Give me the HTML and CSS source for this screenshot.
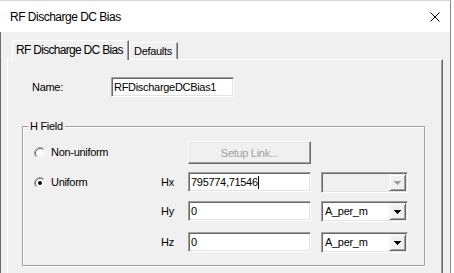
FILE: index.html
```html
<!DOCTYPE html>
<html>
<head>
<meta charset="utf-8">
<link rel="stylesheet" href="styles.css">
</head>
<body>
<div class="window">
  <div class="titlebar">
    <span class="title">RF Discharge DC Bias</span>
    <svg class="close" width="10" height="10" viewBox="0 0 10 10"><path d="M0.5 0.5L9.5 9.5M9.5 0.5L0.5 9.5" stroke="#000" stroke-width="1" fill="none"/></svg>
  </div>
  <div class="client">
    <div class="tabs">
      <div class="tab active">RF Discharge DC Bias</div>
      <div class="tab">Defaults</div>
    </div>
    <div class="panel">
      <div class="name-row">
        <span class="name-label">Name:</span>
        <div class="textbox name-box">RFDischargeDCBias1</div>
      </div>
      <fieldset class="group">
        <legend>H Field</legend>
        <div class="row row-first">
          <svg class="radio" width="12" height="12" viewBox="0 0 12 12">
            <circle cx="6" cy="6" r="5" fill="#fff"/>
            <path d="M2.1 9.9A5.5 5.5 0 0 1 9.9 2.1" fill="none" stroke="#a0a0a0"/>
            <path d="M9.9 2.1A5.5 5.5 0 0 1 2.1 9.9" fill="none" stroke="#fff"/>
            <path d="M2.82 9.18A4.5 4.5 0 0 1 9.18 2.82" fill="none" stroke="#696969"/>
            <path d="M9.18 2.82A4.5 4.5 0 0 1 2.82 9.18" fill="none" stroke="#e3e3e3"/>
          </svg>
          <span class="radio-label">Non-uniform</span>
          <span class="axis"></span>
          <button class="button" disabled>Setup Link...</button>
          <span></span>
        </div>
        <div class="row">
          <svg class="radio" width="12" height="12" viewBox="0 0 12 12">
            <circle cx="6" cy="6" r="5" fill="#fff"/>
            <path d="M2.1 9.9A5.5 5.5 0 0 1 9.9 2.1" fill="none" stroke="#a0a0a0"/>
            <path d="M9.9 2.1A5.5 5.5 0 0 1 2.1 9.9" fill="none" stroke="#fff"/>
            <path d="M2.82 9.18A4.5 4.5 0 0 1 9.18 2.82" fill="none" stroke="#696969"/>
            <path d="M9.18 2.82A4.5 4.5 0 0 1 2.82 9.18" fill="none" stroke="#e3e3e3"/>
            <circle cx="6" cy="6" r="2" fill="#000"/>
          </svg>
          <span class="radio-label">Uniform</span>
          <span class="axis">Hx</span>
          <div class="textbox">795774,71546<span class="caret"></span></div>
          <div class="combo disabled">
            <span class="combo-value"></span>
            <span class="combo-arrow"><svg width="7" height="4" viewBox="0 0 7 4"><path d="M0 0h7v1H0zM1 1h5v1H1zM2 2h3v1H2zM3 3h1v1H3z" fill="#a0a0a0"/></svg></span>
          </div>
        </div>
        <div class="row">
          <span></span>
          <span></span>
          <span class="axis">Hy</span>
          <div class="textbox">0</div>
          <div class="combo">
            <span class="combo-value">A_per_m</span>
            <span class="combo-arrow"><svg width="7" height="4" viewBox="0 0 7 4"><path d="M0 0h7v1H0zM1 1h5v1H1zM2 2h3v1H2zM3 3h1v1H3z" fill="#000"/></svg></span>
          </div>
        </div>
        <div class="row row-last">
          <span></span>
          <span></span>
          <span class="axis">Hz</span>
          <div class="textbox">0</div>
          <div class="combo">
            <span class="combo-value">A_per_m</span>
            <span class="combo-arrow"><svg width="7" height="4" viewBox="0 0 7 4"><path d="M0 0h7v1H0zM1 1h5v1H1zM2 2h3v1H2zM3 3h1v1H3z" fill="#000"/></svg></span>
          </div>
        </div>
      </fieldset>
    </div>
  </div>
</div>
</body>
</html>
```

FILE: styles.css
```css
html, body {
  margin: 0;
  padding: 0;
  background: #ffffff;
  overflow: hidden;
}

body {
  font-family: "Liberation Sans", Arial, sans-serif;
  font-size: 11px;
  letter-spacing: -0.3px;
  color: #000;
}

.window {
  width: 451px;
  height: 273px;
  box-sizing: border-box;
  border-top: 1px solid #d4d4d4;
  border-right: 1px solid #888888;
}

.titlebar {
  height: 31px;
  background: #ffffff;
  display: flex;
  align-items: center;
  justify-content: space-between;
  padding: 0 10px 0 10px;
}

.title {
  font-size: 12px;
  letter-spacing: -0.5px;
  line-height: 14px;
  padding-top: 1px;
}

.close {
  display: block;
  margin-top: 1px;
}

.client {
  background: #f0f0f0;
  border-left: 1px solid #6d6d6d;
  height: 241px;
  padding-top: 8px;
  box-sizing: border-box;
  overflow: hidden;
}

.tabs {
  display: flex;
  align-items: flex-end;
  height: 19px;
  margin-left: 11px;
}

.tab {
  box-sizing: border-box;
  background: #f0f0f0;
  border-top: 1px solid #ffffff;
  border-left: 1px solid #ffffff;
  border-right: 1px solid #696969;
  box-shadow: inset -1px 0 0 #a0a0a0;
  height: 17px;
  padding: 2px 0 0 4px;
  width: 49px;
  line-height: 13px;
}

.tab.active {
  position: relative;
  z-index: 1;
  width: 117px;
  height: 20px;
  margin-bottom: -1px;
  padding: 3px 0 0 3px;
  font-size: 12px;
  letter-spacing: -0.7px;
  line-height: 13px;
}

.panel {
  margin-left: 6px;
  width: 436px;
  height: 260px;
  box-sizing: border-box;
  border-top: 1px solid #ffffff;
  border-left: 1px solid #ffffff;
  border-right: 1px solid #696969;
  box-shadow: inset -1px 0 0 #a0a0a0;
  padding: 0 14px;
}

.name-row {
  display: flex;
  align-items: center;
  margin-top: 17px;
  padding-left: 10px;
}

.name-label {
  width: 79px;
  line-height: 13px;
}

.textbox {
  box-sizing: border-box;
  width: 123px;
  height: 20px;
  background: #ffffff;
  border: 1px solid;
  border-color: #a0a0a0 #ffffff #ffffff #a0a0a0;
  box-shadow: inset 1px 1px 0 #696969, inset -1px -1px 0 #e3e3e3;
  padding: 1px 2px;
  line-height: 16px;
  white-space: nowrap;
  overflow: hidden;
}

.caret {
  display: inline-block;
  width: 0;
  height: 13px;
  border-left: 1px solid #000;
  vertical-align: -3px;
}

.group {
  margin: 23px 0 0 0;
  width: 403px;
  box-sizing: border-box;
  min-width: 0;
  border: 1px solid #a0a0a0;
  box-shadow: 1px 1px 0 #ffffff, inset 1px 1px 0 #ffffff;
  padding: 8px 0 12px 11px;
}

.group legend {
  padding: 0 2px;
  margin-left: -6px;
  line-height: 13px;
  background: #f0f0f0;
}

.row {
  display: grid;
  grid-template-columns: 12px 115px 27px 123px 97px;
  align-items: center;
  margin-top: 8px;
}

.row-first {
  margin-top: 0;
}

.row-last {
  margin-top: 10px;
}

.radio {
  display: block;
}

.radio-label {
  padding-left: 5px;
  line-height: 13px;
}

.axis {
  line-height: 13px;
}

.row .textbox,
.row .combo {
  align-self: start;
}

.button {
  appearance: none;
  box-sizing: border-box;
  width: 123px;
  height: 23px;
  margin: 0;
  padding: 0;
  font: inherit;
  letter-spacing: inherit;
  color: #a0a0a0;
  background: #f0f0f0;
  border: 1px solid;
  border-color: #ffffff #696969 #696969 #ffffff;
  box-shadow: inset -1px -1px 0 #a0a0a0, inset 1px 1px 0 #e3e3e3;
  text-align: center;
}

.combo {
  box-sizing: border-box;
  width: 87px;
  height: 21px;
  margin-left: 10px;
  display: flex;
  background: #ffffff;
  border: 1px solid;
  border-color: #a0a0a0 #ffffff #ffffff #a0a0a0;
  box-shadow: inset 1px 1px 0 #696969, inset -1px -1px 0 #e3e3e3;
  padding: 1px;
}

.combo.disabled {
  background: #f0f0f0;
}

.combo-value {
  flex: 1;
  padding-left: 2px;
  line-height: 17px;
  white-space: nowrap;
}

.combo-arrow {
  box-sizing: border-box;
  width: 17px;
  height: 17px;
  background: #f0f0f0;
  border: 1px solid;
  border-color: #f0f0f0 #696969 #696969 #f0f0f0;
  box-shadow: inset 1px 1px 0 #ffffff, inset -1px -1px 0 #a0a0a0;
  display: flex;
  align-items: center;
  justify-content: center;
}

.combo-arrow svg {
  display: block;
  margin-top: 1px;
}
```
